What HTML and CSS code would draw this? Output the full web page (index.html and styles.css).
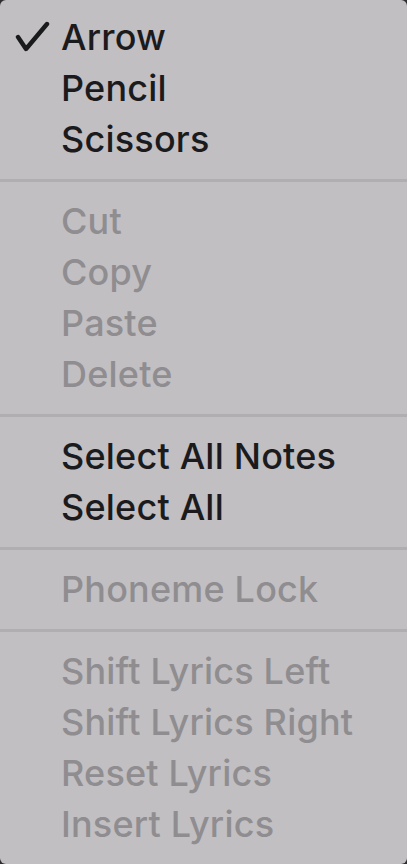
FILE: index.html
```html
<!DOCTYPE html>
<html>
<head>
    <title>Edit Menu</title>
    <link rel="stylesheet" href="styles.css">
</head>
<body>
    <div class="menu">
        <div class="item">
            <svg class="check" width="36" height="32" viewBox="0 0 36 32">
                <path d="M3 17 L11 29 L32 4" fill="none" stroke="#1a1a1c" stroke-width="4.4" stroke-linecap="round" stroke-linejoin="round"/>
            </svg>
            Arrow
        </div>
        <div class="item">Pencil</div>
        <div class="item">Scissors</div>
        <div class="sep"></div>
        <div class="item off">Cut</div>
        <div class="item off">Copy</div>
        <div class="item off">Paste</div>
        <div class="item off">Delete</div>
        <div class="sep"></div>
        <div class="item">Select All Notes</div>
        <div class="item">Select All</div>
        <div class="sep"></div>
        <div class="item off">Phoneme Lock</div>
        <div class="sep"></div>
        <div class="item off">Shift Lyrics Left</div>
        <div class="item off">Shift Lyrics Right</div>
        <div class="item off">Reset Lyrics</div>
        <div class="item off">Insert Lyrics</div>
    </div>
</body>
</html>
```

FILE: styles.css
```css
html, body {
    margin: 0;
    padding: 0;
    background: #2e2d30;
}
.menu {
    width: 407px;
    height: 864px;
    box-sizing: border-box;
    padding: 12px 0;
    background: #c1bfc2;
    border-radius: 6px;
    font-family: Inter, "Noto Sans", sans-serif;
    font-size: 36px;
    font-weight: 500;
    letter-spacing: 0.2px;
    color: #1b1b1d;
}
.item {
    position: relative;
    height: 51px;
    line-height: 51px;
    padding-left: 61px;
    white-space: nowrap;
}
.item.off {
    color: #8f8d90;
}
.check {
    position: absolute;
    left: 15px;
    top: 8px;
}
.sep {
    height: 3px;
    margin: 14px 0;
    background: #b0aeb1;
}
```
